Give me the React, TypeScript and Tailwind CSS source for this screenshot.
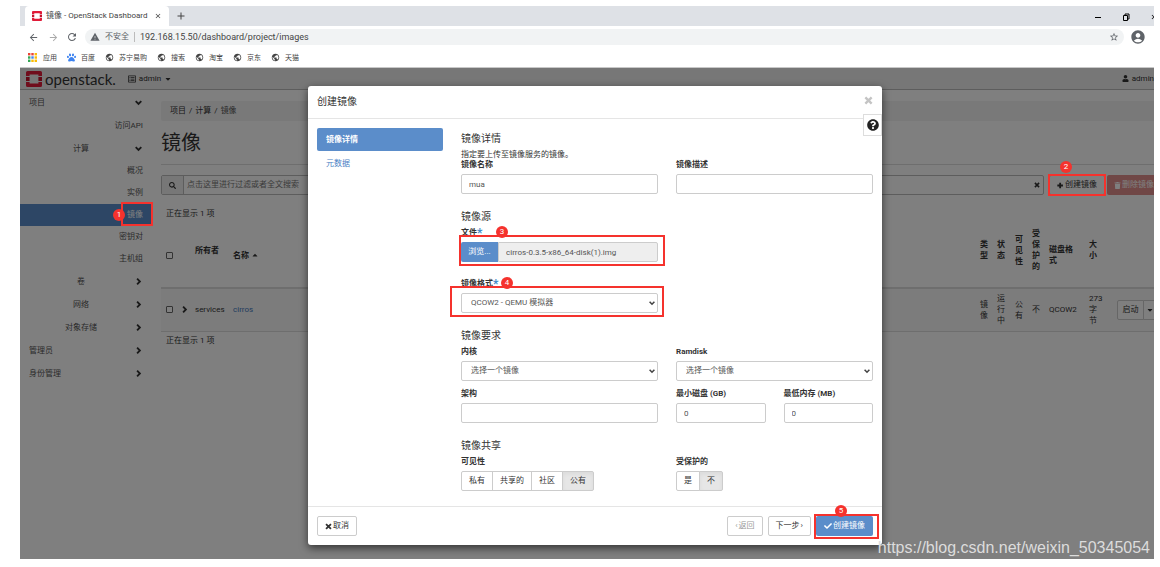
import React from 'react';
import {
  FaCaretDown,
  FaCaretUp,
  FaCheck,
  FaPaw,
  FaQuestionCircle,
  FaRegListAlt,
  FaSearch,
  FaTrash,
  FaUser,
} from 'react-icons/fa';
import {
  MdAccountCircle,
  MdAdd,
  MdArrowBack,
  MdArrowForward,
  MdClose,
  MdPublic,
  MdRefresh,
  MdStarBorder,
  MdWarning,
} from 'react-icons/md';

const bookmarks = ['苏宁易购', '搜索', '淘宝', '京东', '天猫'];

const APP_COLORS = ['#ea4335', '#ea4335', '#fbbc05', '#34a853', '#4285f4', '#fbbc05', '#34a853', '#fbbc05', '#fbbc05'];

const controlClass =
  'block h-5 w-full rounded-[2px] border border-[#ccc] bg-white px-[7px] text-[8px] text-[#555] outline-none';
const buttonClass =
  'flex h-5 items-center gap-px rounded-[2px] border border-[#ccc] bg-white px-[7px] text-[8px] whitespace-nowrap';

function OpenStackMark({ className }: { className?: string }) {
  return (
    <svg viewBox="0 0 16 16" className={className} aria-hidden="true">
      <path fill="#e01b38" d="M1.5 0h13A1.5 1.5 0 0 1 16 1.5V5h-3.6V3.6H3.6V5H0V1.5A1.5 1.5 0 0 1 1.5 0Z" />
      <path fill="#e01b38" d="M0 11h3.6v1.4h8.8V11H16v3.5a1.5 1.5 0 0 1-1.5 1.5h-13A1.5 1.5 0 0 1 0 14.5Z" />
      <path fill="#c4122b" d="M0 6h3.6v4H0zM12.4 6H16v4h-3.6z" />
    </svg>
  );
}

const glyphs = {
  right: 'M3 1l4 4-4 4',
  down: 'M1 3l4 4 4-4',
  cross: 'M1.500 1.500l7 7M8.500 1.500l-7 7',
  plus: 'M4.500 1v8M.5 5h8',
};

function Glyph({ name, className }: { name: keyof typeof glyphs; className: string }) {
  return (
    <svg viewBox="0 0 10 10" fill="none" stroke="currentColor" strokeWidth="2.6" className={className} aria-hidden="true">
      <path d={glyphs[name]} />
    </svg>
  );
}

function Marker({ step, box, dot }: { step: number; box: string; dot: string }) {
  return (
    <>
      <span className={`pointer-events-none absolute z-20 border-2 border-[#f5322d] ${box}`} />
      <span
        className={`pointer-events-none absolute z-20 flex size-3 items-center justify-center rounded-full bg-[#f5322d] text-[8px] leading-none font-normal text-white ${dot}`}
      >
        {step}
      </span>
    </>
  );
}

function BrowserChrome() {
  return (
    <div className="overflow-hidden border-b border-[#c8c8c8] bg-white font-['Roboto','Noto_Sans_CJK_SC',sans-serif] text-[8px] leading-[10px] text-[#444]">
      <div className="flex h-5 items-end bg-[#dee1e6] pl-[5px]">
        <div className="flex h-5 w-36 items-center rounded-t-[4px] bg-white px-[7px]">
          <OpenStackMark className="size-[10px]" />
          <span className="ml-[4px] flex-1 whitespace-nowrap">镜像 - OpenStack Dashboard</span>
          <button type="button" aria-label="Close tab">
            <MdClose className="size-2" />
          </button>
        </div>
        <button type="button" aria-label="New tab" className="ml-[6px] flex h-5 items-center">
          <MdAdd className="size-3" />
        </button>
        <div className="-mr-1 ml-auto flex h-[18px] items-center gap-5 text-black">
          <svg viewBox="0 0 8 8" className="size-2" fill="none" stroke="currentColor">
            <path d="M1 4.5h6" />
          </svg>
          <svg viewBox="0 0 8 8" className="size-2" fill="none" stroke="currentColor">
            <path d="M1.5 2.5h4v5h-4zM3 2.500V1h4v5H5.500" />
          </svg>
          <MdClose className="size-2" />
        </div>
      </div>

      <div className="flex h-[22px] items-center pr-[8px] pl-[8px] text-[#5f6368]">
        <button type="button" aria-label="Back">
          <MdArrowBack className="size-[11px]" />
        </button>
        <button type="button" aria-label="Forward" className="ml-[9px] text-[#aaa]">
          <MdArrowForward className="size-[11px]" />
        </button>
        <button type="button" aria-label="Reload" className="ml-[7px]">
          <MdRefresh className="size-3" />
        </button>
        <div className="ml-[7px] flex h-4 flex-1 items-center rounded-full bg-[#f1f3f4] px-[5px]">
          <MdWarning className="size-[10px]" />
          <span className="ml-[5px]">不安全</span>
          <span className="mx-[5px] h-[10px] w-px bg-[#bbb]" />
          <input
            aria-label="Address"
            className="min-w-0 flex-1 bg-transparent text-[9px] text-[#444] outline-none"
            defaultValue="192.168.15.50/dashboard/project/images"
          />
          <MdStarBorder className="size-[10px]" />
        </div>
        <MdAccountCircle className="ml-[6px] size-4" />
      </div>

      <div className="flex h-[19px] items-center gap-[10px] pl-2 text-[7px]">
        <a href="#" className="flex items-center gap-[6px]">
          <svg viewBox="0 0 9 9" className="size-[9px]">
            {APP_COLORS.map((color, i) => (
              <rect key={i} x={(i % 3) * 3.3} y={Math.floor(i / 3) * 3.3} width="2.4" height="2.4" fill={color} />
            ))}
          </svg>
          应用
        </a>
        <a href="#" className="flex items-center gap-[5px]">
          <FaPaw className="size-[9px] text-[#3b82f0]" />
          百度
        </a>
        {bookmarks.map((name) => (
          <a key={name} href="#" className="flex items-center gap-[5px]">
            <MdPublic className="size-[9px]" />
            {name}
          </a>
        ))}
      </div>
    </div>
  );
}

function SideGroup({ label, open, nested }: { label: string; open?: boolean; nested?: boolean }) {
  return (
    <button type="button" className="flex h-[23px] w-full items-center px-[9px]">
      <span className={nested ? 'flex-1 text-center' : 'flex-1 text-left'}>{label}</span>
      <span className="flex w-[10px] justify-center text-[#333]">
        <Glyph name={open ? 'down' : 'right'} className="size-[7px]" />
      </span>
    </button>
  );
}

function Sidebar() {
  return (
    <nav className="w-33 shrink-0 pt-px text-[#555]">
      <SideGroup label="项目" open />
      <a href="#" className="flex h-[23px] items-center justify-end pr-[9px]">访问API</a>
      <SideGroup label="计算" open nested />
      {['概况', '实例', '镜像', '密钥对', '主机组'].map((item) => (
        <a
          key={item}
          href="#"
          className={`relative flex h-[22px] items-center justify-end pr-[9px] ${item === '镜像' ? 'bg-[#5b8dca] text-white' : ''}`}
        >
          {item}
          {item === '镜像' && <Marker step={1} box="-top-[2px] -right-px h-6 w-8" dot="top-[5px] right-[27px]" />}
        </a>
      ))}
      <SideGroup label="卷" nested />
      <SideGroup label="网络" nested />
      <SideGroup label="对象存储" nested />
      <SideGroup label="管理员" />
      <SideGroup label="身份管理" />
    </nav>
  );
}

function ImagesTable() {
  const th = 'pr-1 pl-[5px] pb-[10px] text-left font-bold';
  const td = 'pr-1 pl-[5px]';

  return (
    <table className="w-full table-fixed leading-[11px]">
      <colgroup>
        <col className="w-[18px]" />
        <col className="w-[11px]" />
        <col className="w-[38px]" />
        <col />
        <col className="w-[17px]" />
        <col className="w-[18px]" />
        <col className="w-[17px]" />
        <col className="w-[17px]" />
        <col className="w-[40px]" />
        <col className="w-[28px]" />
        <col className="w-[49px]" />
      </colgroup>
      <thead>
        <tr className="h-[65px] border-b-2 border-[#ddd]">
          <th className="pl-[5px]">
            <input type="checkbox" aria-label="全选" className="block size-[7px] appearance-none rounded-[1px] border border-[#666] bg-white" />
          </th>
          <th />
          <th className={`${th} whitespace-nowrap`}>所有者</th>
          <th className="pl-[5px] text-left">
            <span className="flex items-center gap-[2px]">
              名称 <FaCaretUp className="size-2" />
            </span>
          </th>
          <th className={th}>类型</th>
          <th className={th}>状态</th>
          <th className={th}>可见性</th>
          <th className={th}>受保护的</th>
          <th className="pr-1 pl-[5px] text-left">磁盘格式</th>
          <th className="pr-2 pb-[10px] pl-[5px] text-left">大小</th>
          <th />
        </tr>
      </thead>
      <tbody>
        <tr className="h-[43px] border-b border-[#ddd] bg-[#f9f9f9]">
          <td className="pl-[5px]">
            <input type="checkbox" aria-label="cirros" className="block size-[7px] appearance-none rounded-[1px] border border-[#666] bg-white" />
          </td>
          <td>
            <button type="button" aria-label="展开" className="flex w-full justify-center">
              <Glyph name="right" className="size-[7px]" />
            </button>
          </td>
          <td className={td}>services</td>
          <td className={td}>
            <a href="#" className="text-[#4479bd]">cirros</a>
          </td>
          <td className={td}>镜像</td>
          <td className={td}>运行中</td>
          <td className={td}>公有</td>
          <td className={td}>不</td>
          <td className={td}>QCOW2</td>
          <td className="pr-2 pl-[5px]">273 字节</td>
          <td className="pl-[5px]">
            <div className="flex">
              <button type="button" className="h-5 w-[27px] rounded-l-[2px] border border-[#ccc] bg-white">启动</button>
              <button type="button" aria-label="更多操作" className="-ml-px flex h-5 w-[13px] items-center justify-center rounded-r-[2px] border border-[#ccc] bg-white">
                <FaCaretDown className="size-2" />
              </button>
            </div>
          </td>
        </tr>
      </tbody>
    </table>
  );
}

function Dashboard() {
  return (
    <div className="col-start-1 row-start-1 min-w-0 bg-white">
      <header className="flex h-[22px] items-center border-b border-[#bbb] bg-[#eee] pr-[16px] pl-[6px]">
        <OpenStackMark className="size-4" />
        <span className="ml-[3px] font-['Lato',sans-serif] text-[15px] leading-5 text-[#333]">openstack.</span>
        <button type="button" className="ml-3 flex items-center gap-[3px]">
          <FaRegListAlt className="size-2" />
          admin
          <FaCaretDown className="size-2" />
        </button>
        <button type="button" className="ml-auto flex items-center gap-[3px]">
          <FaUser className="size-[7px]" />
          admin
        </button>
      </header>

      <div className="flex">
        <Sidebar />
        <main className="min-w-0 flex-1 pt-[11px] pr-[9px] pl-[9px]">
          <nav className="flex h-5 items-center gap-[3px] rounded-[2px] bg-[#f3f3f3] px-[9px]">
            <a href="#">项目</a>
            <span>/</span>
            <a href="#">计算</a>
            <span>/</span>
            <span className="text-[#555]">镜像</span>
          </nav>
          <h1 className="mt-2 border-b border-[#ddd] pb-[7px] text-xl leading-7 font-normal">镜像</h1>

          <div className="mt-[10px] flex">
            <div className="flex h-5 flex-1 rounded-[2px] border border-[#bbb]">
              <span className="flex w-[22px] items-center justify-center border-r border-[#bbb] bg-[#eee]">
                <FaSearch className="size-[7px]" />
              </span>
              <input
                aria-label="过滤"
                placeholder="点击这里进行过滤或者全文搜索"
                className="min-w-0 flex-1 bg-white px-[3px] outline-none placeholder:text-[#777]"
              />
              <button type="button" aria-label="清除" className="px-[3px]">
                <Glyph name="cross" className="size-[6px]" />
              </button>
            </div>
            <div className="relative ml-[5px]">
              <button type="button" className={buttonClass}>
                <Glyph name="plus" className="size-[7px]" />
                创建镜像
              </button>
              <Marker step={2} box="-inset-px" dot="-top-[14px] left-[11px]" />
            </div>
            <button type="button" disabled className="ml-[2px] flex h-5 items-center gap-px rounded-[2px] bg-[#e08f8c] px-[7px] whitespace-nowrap text-white">
              <FaTrash className="size-[7px]" />
              删除镜像
            </button>
          </div>

          <p className="mt-[14px] mb-1 pl-[5px]">正在显示 1 项</p>
          <ImagesTable />
          <p className="mt-1 pl-[5px]">正在显示 1 项</p>
        </main>
      </div>
    </div>
  );
}

function Section({ title, children }: { title: string; children: React.ReactNode }) {
  return (
    <section>
      <h3 className="mb-1 text-[10px] leading-[14px]">{title}</h3>
      {children}
    </section>
  );
}

type FieldProps = { id: string; label: string; required?: boolean; children: React.ReactNode };

function Field({ id, label, required, children }: FieldProps) {
  return (
    <div className="min-w-0">
      <label htmlFor={id} className="mb-1 flex font-bold">
        {label}
        {required && <span className="text-xs leading-[10px] text-[#428bca]">*</span>}
      </label>
      {children}
    </div>
  );
}

function Select({ id, option }: { id: string; option: string }) {
  return (
    <div className="relative">
      <select id={id} className={`${controlClass} appearance-none pl-[9px]`}>
        <option>{option}</option>
      </select>
      <span className="pointer-events-none absolute inset-y-0 right-[3px] flex items-center text-[#444]">
        <Glyph name="down" className="size-[6px]" />
      </span>
    </div>
  );
}

function ToggleGroup({ id, options, active }: { id: string; options: string[]; active: string }) {
  return (
    <div id={id} role="group" className="flex">
      {options.map((option) => (
        <button
          key={option}
          type="button"
          aria-pressed={option === active}
          className={`-mr-px h-5 border border-[#ccc] px-[7px] text-[#333] first:rounded-l-[2px] last:rounded-r-[2px] ${
            option === active ? 'bg-[#e6e6e6] inset-shadow-sm' : 'bg-white'
          }`}
        >
          {option}
        </button>
      ))}
    </div>
  );
}

function ImageForm() {
  return (
    <form className="flex flex-1 flex-col gap-4 pt-1">
      <Section title="镜像详情">
        <p>指定要上传至镜像服务的镜像。</p>
        <div className="grid grid-cols-2 gap-x-[18px]">
          <Field id="name" label="镜像名称">
            <input id="name" className={controlClass} defaultValue="mua" />
          </Field>
          <Field id="description" label="镜像描述">
            <input id="description" className={controlClass} />
          </Field>
        </div>
      </Section>

      <Section title="镜像源">
        <div className="grid grid-cols-2 gap-x-[18px] gap-y-[17px]">
          <div className="relative col-start-1">
            <Field id="file" label="文件" required>
              <div className="flex">
                <button type="button" className="h-5 w-[37px] rounded-l-[2px] bg-[#5b8dca] text-white">浏览...</button>
                <input
                  id="file"
                  readOnly
                  className="h-5 min-w-0 flex-1 rounded-r-[2px] border border-[#ccc] bg-[#eee] px-[7px] text-[#555] outline-none"
                  defaultValue="cirros-0.3.5-x86_64-disk(1).img"
                />
              </div>
            </Field>
            <Marker step={3} box="top-[7px] -right-[7px] -bottom-[4px] -left-[2px]" dot="-top-[2px] left-[35px]" />
          </div>
          <div className="relative col-start-1">
            <Field id="format" label="镜像格式" required>
              <Select id="format" option="QCOW2 - QEMU 模拟器" />
            </Field>
            <Marker step={4} box="top-[7px] -right-[6px] -bottom-[4px] -left-[11px]" dot="-top-[2px] left-10" />
          </div>
        </div>
      </Section>

      <Section title="镜像要求">
        <div className="grid grid-cols-2 gap-x-[18px] gap-y-2">
          <Field id="kernel" label="内核">
            <Select id="kernel" option="选择一个镜像" />
          </Field>
          <Field id="ramdisk" label="Ramdisk">
            <Select id="ramdisk" option="选择一个镜像" />
          </Field>
          <Field id="arch" label="架构">
            <input id="arch" className={controlClass} />
          </Field>
          <div className="grid grid-cols-2 gap-x-[18px]">
            <Field id="min-disk" label="最小磁盘 (GB)">
              <input id="min-disk" className={controlClass} defaultValue="0" />
            </Field>
            <Field id="min-ram" label="最低内存 (MB)">
              <input id="min-ram" className={controlClass} defaultValue="0" />
            </Field>
          </div>
        </div>
      </Section>

      <Section title="镜像共享">
        <div className="grid grid-cols-2 gap-x-[18px]">
          <Field id="visibility" label="可见性">
            <ToggleGroup id="visibility" options={['私有', '共享的', '社区', '公有']} active="公有" />
          </Field>
          <Field id="protected" label="受保护的">
            <ToggleGroup id="protected" options={['是', '不']} active="不" />
          </Field>
        </div>
      </Section>
    </form>
  );
}

function CreateImageModal() {
  return (
    <div
      role="dialog"
      aria-labelledby="modal-title"
      className="relative w-full max-w-[574px] rounded-[3px] bg-white shadow-[0_3px_9px_rgba(0,0,0,0.6)]"
    >
      <div className="flex h-[33px] items-center justify-between border-b border-[#e5e5e5] px-[9px]">
        <h2 id="modal-title" className="text-[10px] leading-[14px]">创建镜像</h2>
        <button type="button" aria-label="关闭" className="mb-1 text-[#c4c4c4]">
          <Glyph name="cross" className="size-[9px]" />
        </button>
      </div>
      <button
        type="button"
        aria-label="帮助"
        className="absolute top-7 right-0 flex h-[22px] w-[19px] items-center justify-center border border-[#ddd] bg-white text-[#222]"
      >
        <FaQuestionCircle className="size-3" />
      </button>

      <div className="flex gap-[18px] px-[9px] pt-[9px] pb-[15px]">
        <ul className="w-[126px] shrink-0">
          <li>
            <a href="#" className="flex h-[23px] items-center rounded-[2px] bg-[#5b8dca] px-[9px] font-bold text-white">镜像详情</a>
          </li>
          <li className="mt-px">
            <a href="#" className="flex h-[23px] items-center px-[9px] text-[#4a80c4]">元数据</a>
          </li>
        </ul>
        <ImageForm />
      </div>

      <div className="flex border-t border-[#e5e5e5] p-[9px]">
        <button type="button" className={buttonClass}>
          <Glyph name="cross" className="size-[7px]" />
          取消
        </button>
        <button type="button" disabled className={`${buttonClass} ml-auto text-[#999]`}>
          <span>‹</span> 返回
        </button>
        <button type="button" className={`${buttonClass} ml-[5px]`}>
          下一步 <span>›</span>
        </button>
        <div className="relative ml-[5px]">
          <button type="button" className="flex h-5 items-center gap-px rounded-[2px] bg-[#5b8dca] px-2 whitespace-nowrap text-white">
            <FaCheck className="size-2" />
            创建镜像
          </button>
          <Marker step={5} box="-top-[2px] -right-[6px] -bottom-[3px] -left-[2px]" dot="-top-[11px] left-[19px]" />
        </div>
      </div>
    </div>
  );
}

export default function App() {
  return (
    <div className="min-h-screen bg-white pt-[6px] pr-[6px] pl-5">
      <BrowserChrome />
      <div className="relative overflow-hidden font-['Roboto','Noto_Sans_CJK_SC',sans-serif] text-[8px] leading-[10px] text-[#333]">
        {/* the page runs under the right edge of the window */}
        <div className="grid w-[calc(100%+16px)]">
          <Dashboard />
          <div className="relative z-10 col-start-1 row-start-1 flex justify-center bg-black/50 pt-[18px] pb-[14px]">
            <CreateImageModal />
          </div>
        </div>
        <p className="pointer-events-none absolute right-1 bottom-[2px] z-20 font-['Liberation_Sans',sans-serif] text-base leading-[18px] text-[#dcdcdc]">
          https://blog.csdn.net/weixin_50345054
        </p>
      </div>
    </div>
  );
}
